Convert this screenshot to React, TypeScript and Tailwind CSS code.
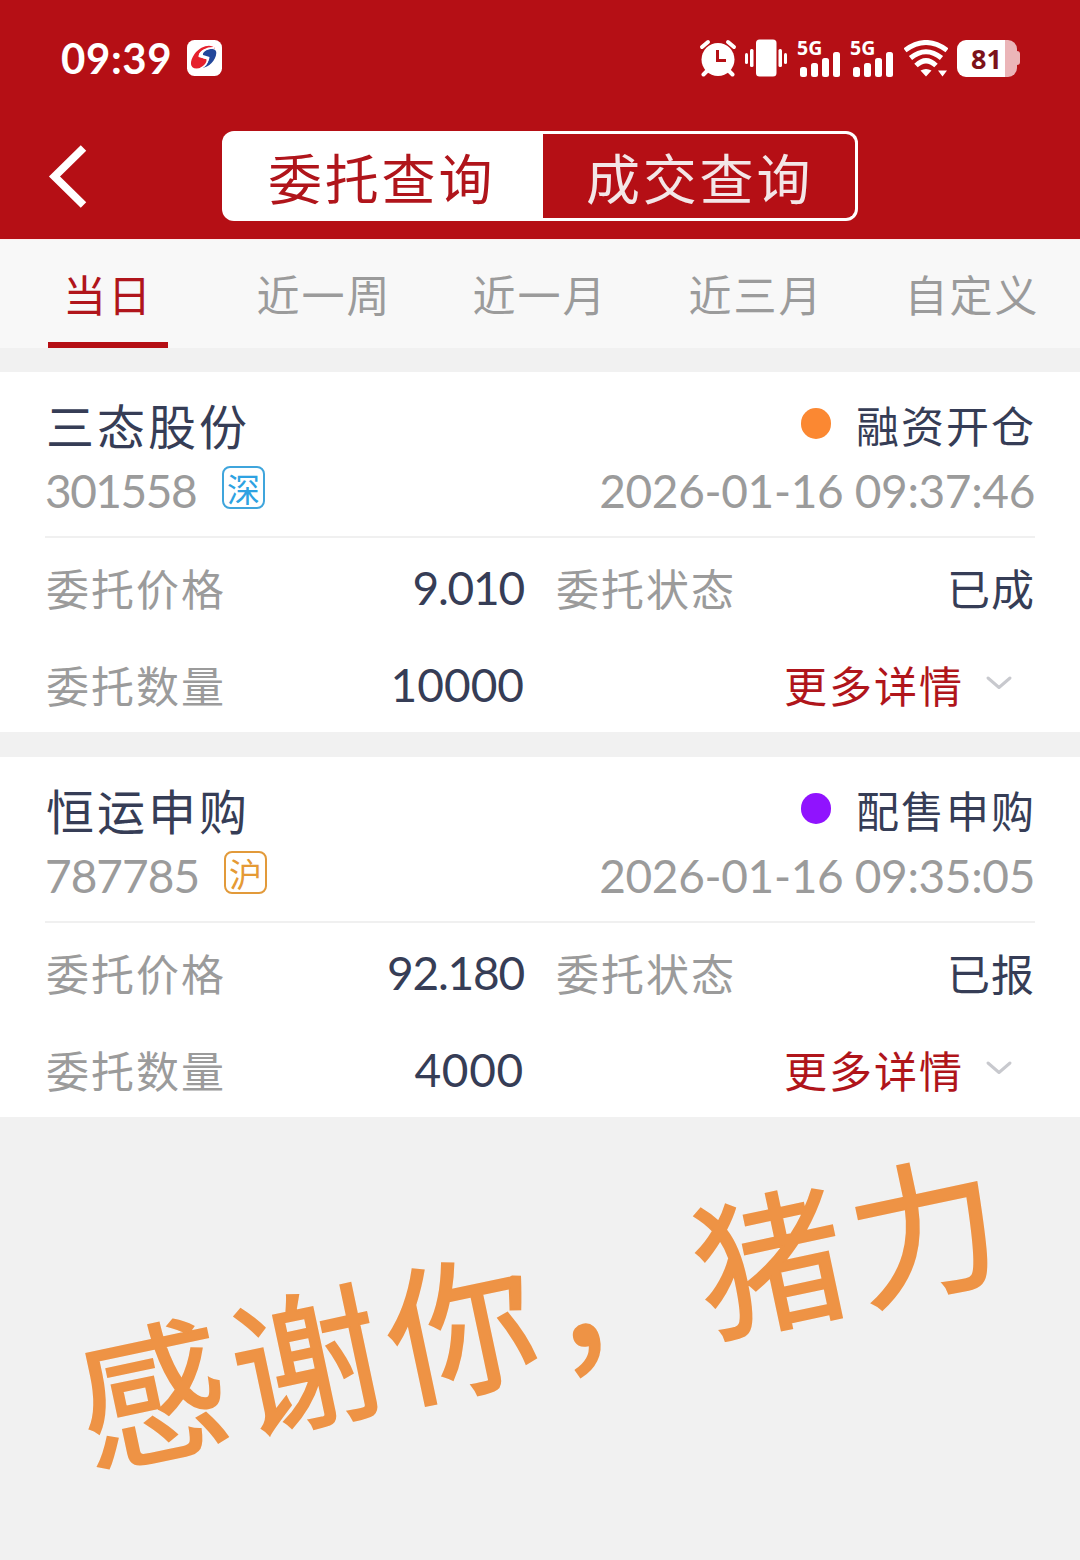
import React from "react";

const CJK = "font-['Noto_Sans_CJK_SC',sans-serif]";
const NUM = "font-['Lato','Noto_Sans_CJK_SC',sans-serif]";

function AppBadge() {
  return (
    <svg className="ml-[17px] h-9 w-[35px]" viewBox="0 0 35 36">
      <rect width="35" height="36" rx="7.5" fill="#fff" />
      <path d="M28 8.500C25 3.500 14 5 7.500 14C2.500 21 2.500 28.500 9.500 28.500C16 28.500 20.500 24 20.500 19.500L11.500 17C11 12 18 7 28 8.500Z" fill="#e5202c" />
      <path d="M14.500 28C22 27.500 29 20 29.300 13C29.500 9.500 26.500 8.500 23 9C18 10 15.500 13 16 15L22.500 17C22 22.500 18.500 26 14.500 28Z" fill="#23479b" />
      <path d="M27 7.800C19 7.500 13 12 13 15C13 18.200 20.500 17 20.500 19.500C20.500 23 17.500 26.500 13.500 28.500" fill="none" stroke="#fff" strokeWidth="1.700" />
    </svg>
  );
}

function AlarmIcon() {
  return (
    <svg className="h-[38px] w-[38px]" viewBox="0 0 38 38">
      <circle cx="19" cy="20.500" r="16.500" fill="#fff" />
      <path d="M3 8L9 3M35 8L29 3" stroke="#fff" strokeWidth="4" strokeLinecap="round" />
      <path d="M8 32L4.500 35.500M30 32L33.500 35.500" stroke="#fff" strokeWidth="4" strokeLinecap="round" />
      <path d="M18.500 11V21.500H27" fill="none" stroke="#b50f15" strokeWidth="3" />
    </svg>
  );
}

function VibrateIcon() {
  return (
    <svg className="ml-2 h-[38px] w-[42px]" viewBox="0 0 42 38" fill="#fff">
      <rect x="11" y="0.500" width="20.500" height="37" rx="3.500" />
      <rect x="5" y="10" width="3.500" height="18" rx="1.500" />
      <rect x="0" y="14" width="3" height="11" rx="1.500" />
      <rect x="33.500" y="10" width="3.500" height="18" rx="1.500" />
      <rect x="39" y="14" width="3" height="11" rx="1.500" />
    </svg>
  );
}

function Signal() {
  return (
    <div className="flex h-[37px] w-[43px] flex-col justify-between">
      <span className="h-[13px] font-['Noto_Sans',sans-serif] text-[19.500px] leading-[15px] font-bold">5G</span>
      <div className="-mt-[3px] ml-[3px] flex h-[25px] items-end gap-[4.500px]">
        <i className="h-2.5 w-[6.500px] rounded-[2.500px] bg-white" />
        <i className="h-3.5 w-[6.500px] rounded-[2.500px] bg-white" />
        <i className="h-[19px] w-[6.500px] rounded-[2.500px] bg-white" />
        <i className="h-[25px] w-[6.500px] rounded-[2.500px] bg-white" />
      </div>
    </div>
  );
}

function WifiIcon() {
  return (
    <svg className="ml-[11px] h-[37px] w-[44px]" viewBox="0 0 44 37">
      <g fill="none" stroke="#fff" strokeWidth="5">
        <path d="M1 10.300Q22 -5.300 43 10.300" />
        <path d="M6.500 18Q22 5.500 37.500 18" />
        <path d="M12 25.500Q22 16 32 25.500" />
      </g>
      <path d="M16.500 30.500Q22 27.500 27.500 30.500L22 36.500ZM34 30.500H43L38.500 36.500Z" fill="#fff" />
    </svg>
  );
}

function Battery() {
  return (
    <div className="ml-[9px] flex items-center">
      <div className="flex h-[37px] w-[60px] items-center overflow-hidden rounded-[9px] bg-[linear-gradient(90deg,#fff_80%,#ebb5b8_80%)]">
        <span className="w-full pl-[14px] font-['Noto_Sans',sans-serif] text-[27px] leading-[37px] font-bold text-[#7c1219]">81</span>
      </div>
      <i className="h-3.5 w-[3px] rounded-r-[3px] bg-[#ebb5b8]" />
    </div>
  );
}

function StatusBar() {
  return (
    <div className="flex h-[116px] items-center pl-[61px] text-white">
      <span className="w-[109px] font-['Lato',sans-serif] text-[42px] leading-[60px] font-bold tracking-[0.6px] whitespace-nowrap">09:39</span>
      <AppBadge />
      <div className="ml-auto flex items-center pr-[60px]">
        <AlarmIcon />
        <VibrateIcon />
        <div className="ml-[10px] flex gap-2.5">
          <Signal />
          <Signal />
        </div>
        <WifiIcon />
        <Battery />
      </div>
    </div>
  );
}

function Header() {
  return (
    <header className="h-[239px] bg-[#b50f15]">
      <StatusBar />
      <div className="flex pt-[15px] pl-12">
        <svg className="mt-[13px] h-16 w-10" viewBox="0 0 40 64">
          <path d="M35.500 4L6.500 32.500L35.500 61" fill="none" stroke="#fff" strokeWidth="7.800" />
        </svg>
        <div className="ml-[134px] flex h-[90px] w-[636px] rounded-xl bg-white p-[3px] text-[54px] leading-[86px] tracking-[2.800px] whitespace-nowrap">
          <span className="w-[318px] pl-[43px] text-[#b0151b]">委托查询</span>
          <span className="flex-1 rounded-r-[9px] bg-[#b50f15] pl-[43px] text-[#f3e6e7]">成交查询</span>
        </div>
      </div>
    </header>
  );
}

const TABS = ["当日", "近一周", "近一月", "近三月", "自定义"];

function Tabs() {
  return (
    <nav className="grid h-[109px] grid-cols-5 border-t border-[#fdeeee] bg-[#f8f8f8] text-[43px] tracking-[2px]">
      {TABS.map((t, i) => (
        <div
          key={t}
          className={
            i === 0
              ? "mx-12 flex h-[108px] flex-col border-b-[6px] border-[#b50f15] text-center text-[#b0151b]"
              : "h-[108px] text-center text-[#9b9b9b]"
          }
        >
          <span className="h-[101px] leading-[106px] whitespace-nowrap">{t}</span>
        </div>
      ))}
    </nav>
  );
}

type Order = {
  name: string;
  code: string;
  market: string;
  badge: string;
  codeSpacing: string;
  kind: string;
  dot: string;
  time: string;
  price: string;
  amount: string;
  amountSpacing: string;
  status: string;
};

const ORDERS: Order[] = [
  {
    name: "三态股份",
    code: "301558",
    codeSpacing: "w-[177px] tracking-[-1.500px]",
    market: "深",
    badge: "border-[#3fa5dc] text-[#2da2e2]",
    kind: "融资开仓",
    dot: "bg-[#fb8832]",
    time: "2026-01-16 09:37:46",
    price: "9.010",
    amount: "10000",
    amountSpacing: "tracking-[0px]",
    status: "已成",
  },
  {
    name: "恒运申购",
    code: "787785",
    codeSpacing: "w-[179px] tracking-[-1px]",
    market: "沪",
    badge: "border-[#e29a3a] text-[#e59a35]",
    kind: "配售申购",
    dot: "bg-[#9013fe]",
    time: "2026-01-16 09:35:05",
    price: "92.180",
    amount: "4000",
    amountSpacing: "tracking-[0.700px]",
    status: "已报",
  },
];

function OrderCard({ o }: { o: Order }) {
  return (
    <article className="h-[360px] bg-white px-[45px] whitespace-nowrap text-[#363d56]">
      <div className="flex h-[166px] flex-col border-b-2 border-[#f0f0f0] pt-[22px]">
        <div className="flex h-[60px] items-center justify-between leading-[60px]">
          <span className="pl-px text-[48px] tracking-[3px]">{o.name}</span>
          <div className="flex items-center">
            <i className={"mr-[25px] h-[31px] w-[30px] -translate-y-px rounded-full " + o.dot} />
            <span className="-mr-px text-[43px] tracking-[2px]">{o.kind}</span>
          </div>
        </div>
        <div className="flex h-[73px] items-center text-[#9b9b9b]">
          <span className={NUM + " text-[46px] leading-[73px] " + o.codeSpacing}>{o.code}</span>
          <span className={"flex h-[43px] w-[43px] -translate-y-[3px] items-center justify-center rounded-[8px] border-2 text-[33px] leading-[36px] " + o.badge}>
            {o.market}
          </span>
          <span className={NUM + " ml-auto text-[46px] leading-[73px] tracking-[-0.350px]"}>{o.time}</span>
        </div>
      </div>
      <div className="grid h-[97px] grid-cols-[479px_1fr] items-center leading-[98px]">
        <div className="flex items-center justify-between">
          <span className="pl-px text-[43px] tracking-[2px] text-[#9b9b9b]">委托价格</span>
          <span className={NUM + " translate-y-px text-[46px] tracking-[-1.200px]"}>{o.price}</span>
        </div>
        <div className="flex items-center justify-between pl-8">
          <span className="text-[43px] tracking-[2px] text-[#9b9b9b]">委托状态</span>
          <span className="text-[43px] tracking-[1px]">{o.status}</span>
        </div>
      </div>
      <div className="grid h-[97px] grid-cols-[479px_1fr] items-center leading-[98px]">
        <div className="flex items-center justify-between">
          <span className="pl-px text-[43px] tracking-[2px] text-[#9b9b9b]">委托数量</span>
          <span className={NUM + " translate-y-px text-[46px] " + o.amountSpacing}>{o.amount}</span>
        </div>
        <div className="flex items-center justify-end pr-[22px]">
          <span className="text-[43px] tracking-[2px] text-[#b0151b]">更多详情</span>
          <svg className="-mt-0.5 ml-[21px] h-4 w-7" viewBox="0 0 28 16">
            <path d="M3 3L14 12.500L25 3" fill="none" stroke="#c8c9ce" strokeWidth="3" strokeLinecap="round" strokeLinejoin="round" />
          </svg>
        </div>
      </div>
    </article>
  );
}

export default function App() {
  return (
    <div className={"relative h-[1560px] w-[1080px] overflow-hidden bg-[#f1f1f1] " + CJK}>
      <Header />
      <Tabs />
      <main className="flex flex-col gap-[25px] pt-6">
        {ORDERS.map((o) => (
          <OrderCard key={o.code} o={o} />
        ))}
      </main>
      <p className="absolute top-[1189px] left-[67px] h-[228px] w-[948px] origin-center -rotate-12 text-[149px] leading-[228px] tracking-[9px] whitespace-nowrap text-[#ee9345] [-webkit-text-stroke:2px_#ee9345]">
        感谢你，猪力
      </p>
    </div>
  );
}
